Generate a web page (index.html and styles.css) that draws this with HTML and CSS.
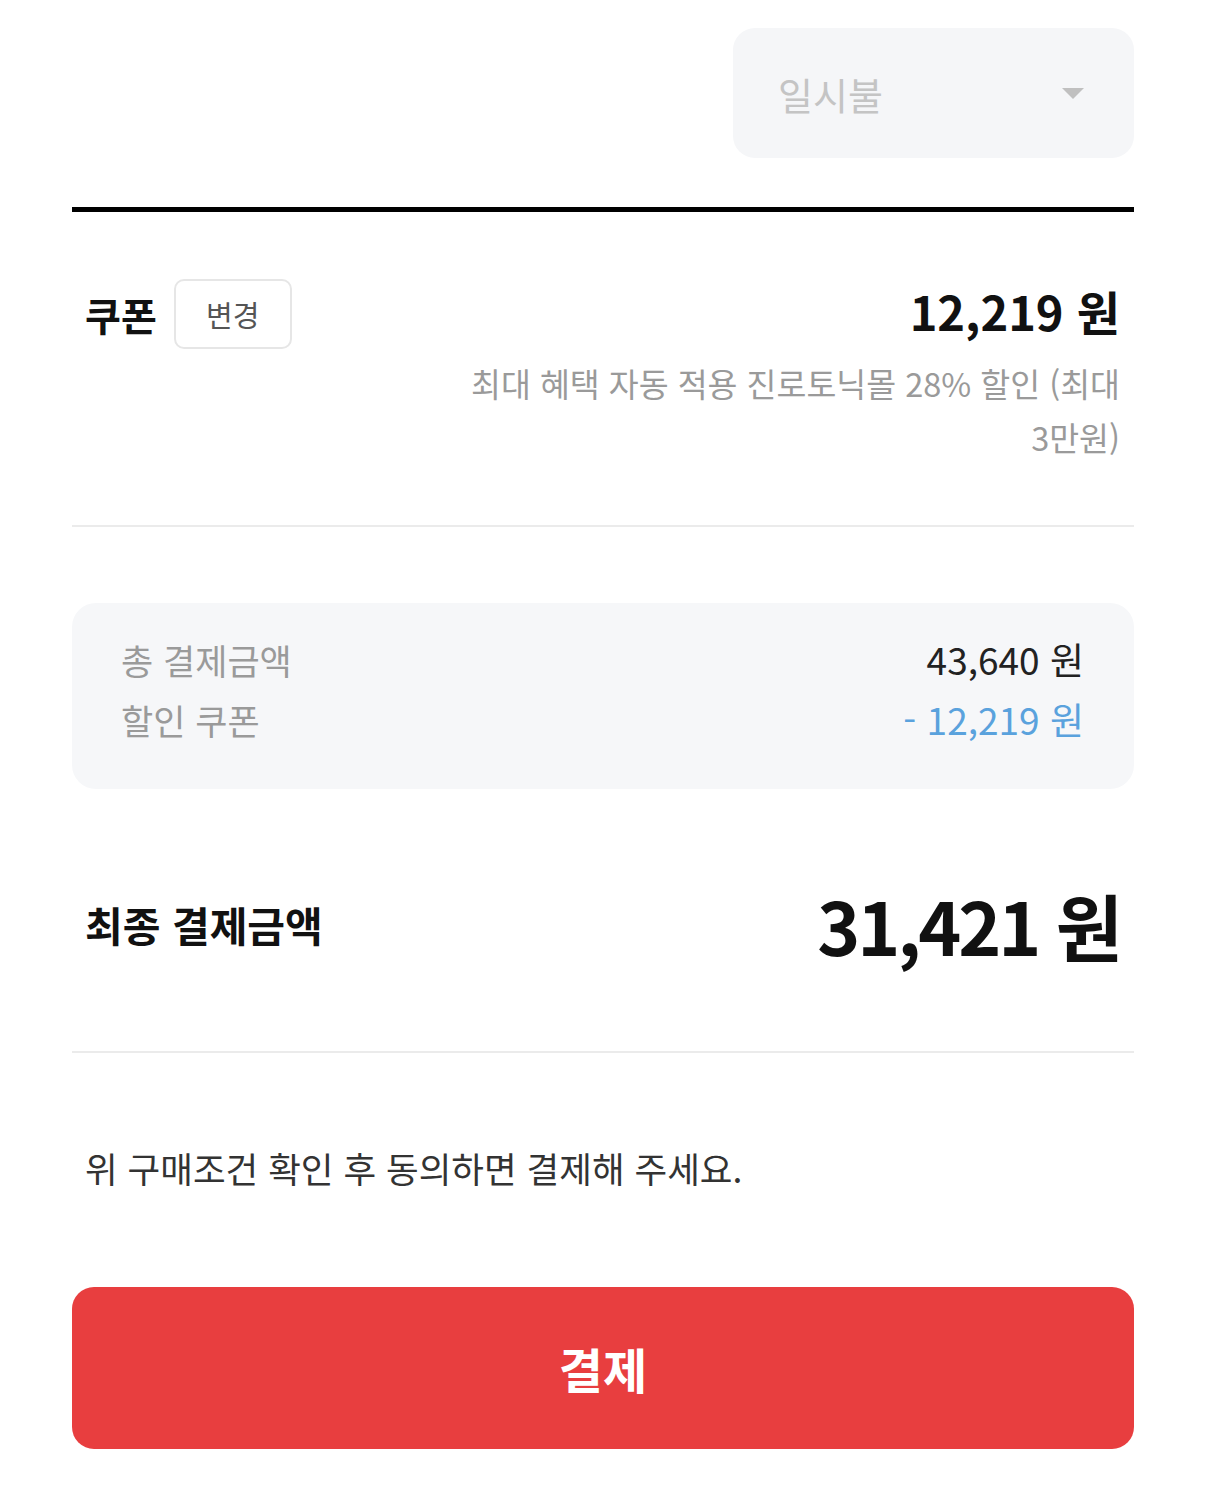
FILE: index.html
```html
<!DOCTYPE html>
<html lang="ko">
<head>
    <meta charset="utf-8">
    <title>결제</title>
    <link rel="stylesheet" href="styles.css">
</head>
<body>
    <div class="container">
        <div class="installment">
            <div class="select-box">
                <span class="select-value">일시불</span>
                <span class="select-caret"></span>
            </div>
        </div>

        <div class="coupon-section">
            <div class="coupon-head">
                <span class="coupon-title">쿠폰</span>
                <button class="change-btn">변경</button>
            </div>
            <div class="coupon-info">
                <div class="coupon-amount">12,219 원</div>
                <div class="coupon-desc">최대 혜택 자동 적용 진로토닉몰 28% 할인 (최대 3만원)</div>
            </div>
        </div>

        <div class="summary-box">
            <div class="summary-row">
                <span class="summary-label">총 결제금액</span>
                <span class="summary-value">43,640 원</span>
            </div>
            <div class="summary-row">
                <span class="summary-label">할인 쿠폰</span>
                <span class="summary-value discount">- 12,219 원</span>
            </div>
        </div>

        <div class="final-row">
            <span class="final-label">최종 결제금액</span>
            <span class="final-value">31,421 원</span>
        </div>

        <p class="notice">위 구매조건 확인 후 동의하면 결제해 주세요.</p>

        <button class="pay-btn">결제</button>
    </div>
</body>
</html>
```

FILE: styles.css
```css
* {
    box-sizing: border-box;
    margin: 0;
    padding: 0;
}

body {
    font-family: "Noto Sans CJK KR", "Noto Sans", sans-serif;
    background: #ffffff;
    color: #111111;
}

.container {
    width: 1206px;
    padding: 28px 72px 0;
}

.installment {
    display: flex;
    justify-content: flex-end;
    padding-bottom: 49px;
    border-bottom: 5px solid #000000;
}

.select-box {
    width: 401px;
    height: 130px;
    background: #f5f6f8;
    border-radius: 22px;
    display: flex;
    align-items: center;
    justify-content: space-between;
    padding: 0 50px 0 45px;
}

.select-value {
    font-size: 38px;
    color: #c4c4c4;
}

.select-caret {
    width: 0;
    height: 0;
    border-left: 11px solid transparent;
    border-right: 11px solid transparent;
    border-top: 11px solid #c0c0c0;
}

.coupon-section {
    display: flex;
    justify-content: space-between;
    align-items: flex-start;
    padding: 67px 14px 61px 13px;
    border-bottom: 2px solid #ebebeb;
}

.coupon-head {
    display: flex;
    align-items: center;
    gap: 17px;
}

.coupon-title {
    font-size: 39px;
    font-weight: 700;
    color: #111111;
}

.change-btn {
    font-family: inherit;
    font-size: 29px;
    color: #555555;
    background: #ffffff;
    border: 2px solid #e6e6e6;
    border-radius: 10px;
    width: 118px;
    height: 70px;
}

.coupon-info {
    text-align: right;
    width: 680px;
}

.coupon-amount {
    font-size: 47px;
    font-weight: 700;
    line-height: 64px;
}

.coupon-desc {
    font-size: 32.5px;
    color: #9a9a9a;
    line-height: 54px;
    margin-top: 13px;
    word-break: keep-all;
}

.summary-box {
    margin-top: 76px;
    background: #f6f7f9;
    border-radius: 24px;
    padding: 26px 50px 40px 49px;
}

.summary-row {
    display: flex;
    justify-content: space-between;
    align-items: center;
    height: 60px;
    font-size: 35px;
}

.summary-label {
    color: #9a9a9a;
}

.summary-value {
    color: #222222;
    font-size: 37px;
}

.summary-value.discount {
    color: #5aa2dd;
}

.final-row {
    display: flex;
    justify-content: space-between;
    align-items: center;
    padding: 85px 14px 77px 13px;
    border-bottom: 2px solid #ebebeb;
}

.final-label {
    font-size: 41px;
    font-weight: 700;
}

.final-value {
    font-size: 73px;
    font-weight: 700;
    letter-spacing: -3px;
    line-height: 100px;
}

.notice {
    font-size: 35.5px;
    color: #333333;
    padding: 90px 13px 0;
    line-height: 50px;
}

.pay-btn {
    display: block;
    width: 100%;
    height: 162px;
    margin-top: 94px;
    background: #e83e3f;
    color: #ffffff;
    border: none;
    border-radius: 22px;
    font-family: inherit;
    font-size: 48px;
    font-weight: 700;
}
```
